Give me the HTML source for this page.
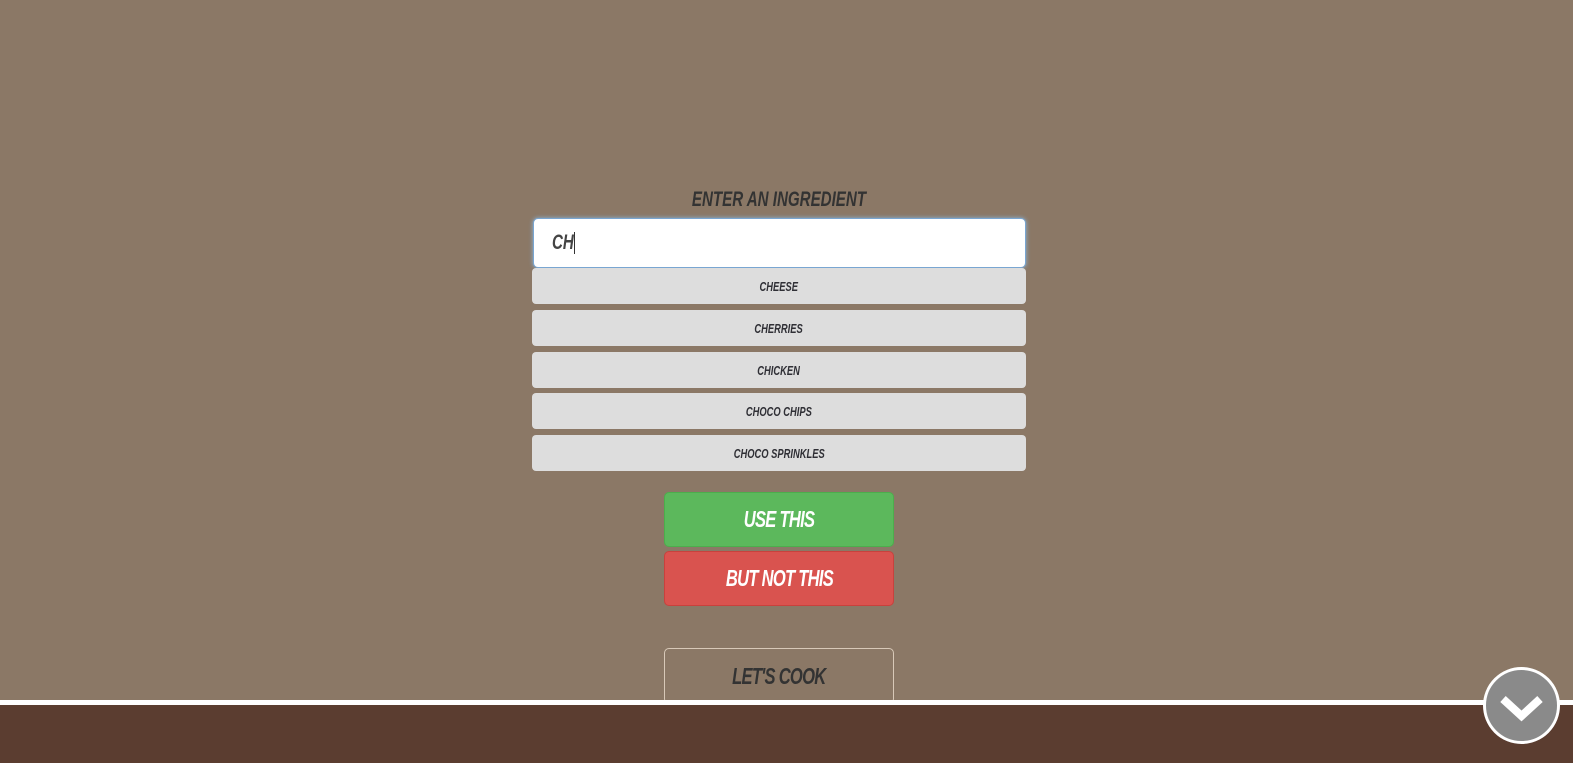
<!DOCTYPE html>
<html><head><style>
body{margin:0;width:1573px;height:763px;background:#8b7866;position:relative;overflow:hidden;font-family:"Liberation Sans",sans-serif;font-weight:bold;font-style:italic;text-transform:uppercase;color:#333}
.a{position:absolute;box-sizing:border-box;display:flex;align-items:center;justify-content:center}
.a span.t{display:inline-block;transform:scaleX(0.72)}
.s{left:532px;width:494px;height:36px;background:#dddddd;border-radius:4px;font-size:13px;color:#2f2f35}
.b{left:664px;width:230px;height:55px;border-radius:5px;font-size:23px;color:#fff;letter-spacing:-1px}
</style></head><body>
<div class="a" style="left:532px;top:186px;width:494px;height:28px;font-size:21px;color:#333"><span class="t">Enter an ingredient</span></div>
<div class="a" style="left:533px;top:218px;width:493px;height:50px;background:#fff;border:1px solid #79a6d2;border-radius:5px;box-shadow:0 0 4px #8bb7e0;justify-content:flex-start;padding-left:18px;font-size:21px;color:#444"><span class="t" style="transform-origin:left">CH</span><span style="display:inline-block;width:1px;height:22px;background:#333;margin-left:-8px"></span></div>
<div class="a s" style="top:268px"><span class="t">Cheese</span></div>
<div class="a s" style="top:310px"><span class="t">Cherries</span></div>
<div class="a s" style="top:352px"><span class="t">Chicken</span></div>
<div class="a s" style="top:393px"><span class="t">Choco chips</span></div>
<div class="a s" style="top:435px"><span class="t">Choco sprinkles</span></div>
<div class="a b" style="top:492px;background:#5cb85c;border:1px solid #4cae4c"><span class="t">Use this</span></div>
<div class="a b" style="top:551px;background:#d9534f;border:1px solid #c9413d"><span class="t">But not this</span></div>
<div class="a b" style="top:648px;border:1px solid #d8c9b8;color:#333;height:56px"><span class="t">Let's cook</span></div>
<div style="position:absolute;left:0;top:700px;width:1573px;height:5px;background:#fff"></div>
<div style="position:absolute;left:0;top:705px;width:1573px;height:58px;background:#5b3d30"></div>
<div style="position:absolute;left:1483px;top:667px;width:77px;height:77px;box-sizing:border-box;border:3px solid #fff;border-radius:50%;background:#8a8a8a"></div>
<svg style="position:absolute;left:1483px;top:667px" width="77" height="77"><path d="M20 32 L38.5 49 L57 32" fill="none" stroke="#fff" stroke-width="8"/></svg>
</body></html>
